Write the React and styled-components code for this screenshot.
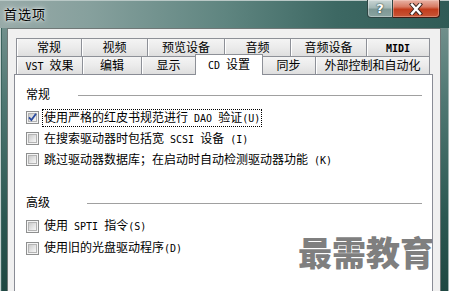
import styled, { createGlobalStyle } from "styled-components";

const Global = createGlobalStyle`
  html, body {
    margin: 0;
    padding: 0;
    overflow: hidden;
    background: #ffffff;
  }
`;

const backTabs = [
  { label: "常规", w: 66 },
  { label: "视频", w: 66 },
  { label: "预览设备", w: 77 },
  { label: "音频", w: 66 },
  { label: "音频设备", w: 76 },
  { label: "MIDI", w: 63, bold: true },
];

const frontTabs = [
  { label: "VST 效果", w: 67 },
  { label: "编辑", w: 59 },
  { label: "显示", w: 54 },
  { label: "CD 设置", w: 68, active: true },
  { label: "同步", w: 54 },
  { label: "外部控制和自动化", w: 114 },
];

// ascii runs get the narrow fixed-width face, like the bitmap font in the dialog
function Mixed({ text }) {
  return text.split(/([\x20-\x7e]+)/).map((part, i) =>
    /^[\x20-\x7e]+$/.test(part) ? <Latin key={i}>{part}</Latin> : part
  );
}

function Check({ checked }) {
  return (
    <Box>
      {checked && (
        <CheckMark viewBox="0 0 13 13">
          <path d="M3 6.3 L5.4 9 L10 2.8" fill="none" stroke="#2a4b9f" strokeWidth="1.8" />
        </CheckMark>
      )}
    </Box>
  );
}

function Option({ text, checked, focused }) {
  return (
    <Row>
      <Check checked={checked} />
      <Label $focused={focused}>
        <Mixed text={text} />
      </Label>
    </Row>
  );
}

export default function App() {
  return (
    <>
      <Global />
      <Window>
        <TitleBar>
          <Title>首选项</Title>
          <Buttons>
            <HelpButton>?</HelpButton>
            <CloseButton>
              <svg width="18" height="12" viewBox="0 0 18 12">
                <path d="M5 1.5 L13 10.5 M13 1.5 L5 10.5" stroke="#3a2520" strokeWidth="4.2" strokeLinecap="square" />
                <path d="M5 1.5 L13 10.5 M13 1.5 L5 10.5" stroke="#ffffff" strokeWidth="2.4" strokeLinecap="square" />
              </svg>
            </CloseButton>
          </Buttons>
        </TitleBar>
        <Client>
          <Tabs>
            <TabRow>
              {backTabs.map((t) => (
                <Tab key={t.label} $w={t.w} $bold={t.bold}>
                  <Mixed text={t.label} />
                </Tab>
              ))}
            </TabRow>
            <TabRow>
              {frontTabs.map((t) => (
                <Tab key={t.label} $w={t.w} $active={t.active}>
                  <Mixed text={t.label} />
                </Tab>
              ))}
            </TabRow>
          </Tabs>
          <Panel>
            <GroupHeader>
              <GroupTitle>常规</GroupTitle>
              <Rule $indent={28} />
            </GroupHeader>
            <Options>
              <Option checked focused text="使用严格的红皮书规范进行 DAO 验证(U)" />
              <Option text="在搜索驱动器时包括宽 SCSI 设备 (I)" />
              <Option text="跳过驱动器数据库；在启动时自动检测驱动器功能 (K)" />
            </Options>
            <GroupHeader $top={25}>
              <GroupTitle>高级</GroupTitle>
              <Rule $indent={37} />
            </GroupHeader>
            <Options $rowHeight={22}>
              <Option text="使用 SPTI 指令(S)" />
              <Option text="使用旧的光盘驱动程序(D)" />
            </Options>
            <Watermark>最需教育</Watermark>
          </Panel>
        </Client>
      </Window>
    </>
  );
}

const Window = styled.div`
  width: 449px;
  height: 291px;
  overflow: hidden;
  display: flex;
  flex-direction: column;
  font-family: "Noto Sans CJK SC", "Liberation Sans", sans-serif;
  font-size: 12px;
  color: #000;
  background: linear-gradient(180deg, #7d9895 0%, #4f7772 35%, #2b5751 75%, #1f4842 100%);
  box-shadow: inset 1px 0 0 #c3d0ce, inset -1px 0 0 #9fb2b0, inset 2px 0 0 #3a625d;
`;

const TitleBar = styled.div`
  height: 28px;
  flex: none;
  display: flex;
  justify-content: space-between;
  align-items: flex-start;
  background: linear-gradient(90deg, #98aaa8 0%, #86a09d 20%, #5f8580 50%, #3d6863 75%, #2f5b56 100%);
  box-shadow: inset 0 1px 0 #b9c8c6;
`;

const Title = styled.div`
  padding: 6px 0 0 4px;
  font-size: 13px;
  line-height: 15px;
  letter-spacing: 1px;
  color: #000;
  text-shadow: 0 0 6px rgba(255, 255, 255, 0.9), 0 0 3px rgba(255, 255, 255, 0.9);
`;

const Buttons = styled.div`
  display: flex;
  margin-right: 9px;
`;

const HelpButton = styled.div`
  width: 26px;
  height: 18px;
  box-sizing: border-box;
  border: 1px solid #2e4644;
  border-top: none;
  border-radius: 0 0 0 4px;
  background: linear-gradient(180deg, #c9d5d4 0%, #a4b8b6 45%, #7e9895 55%, #89a3a0 100%);
  box-shadow: inset 0 0 0 1px rgba(255, 255, 255, 0.35);
  color: #fff;
  font-family: "DejaVu Sans", sans-serif;
  font-weight: bold;
  font-size: 13px;
  line-height: 17px;
  text-align: center;
  text-shadow: 0 0 2px #24403c, 0 0 1px #24403c;
`;

const CloseButton = styled.div`
  width: 47px;
  height: 18px;
  box-sizing: border-box;
  border: 1px solid #3e1a12;
  border-left: none;
  border-top: none;
  border-radius: 0 0 4px 0;
  display: flex;
  align-items: center;
  justify-content: center;
  background: linear-gradient(180deg, #e9b3a6 0%, #d87a63 40%, #c23c1c 55%, #c85638 100%);
  box-shadow: inset 0 0 0 1px rgba(255, 220, 210, 0.35);
`;

const Client = styled.div`
  flex: 1;
  margin: 0 8px 0 7px;
  border: 1px solid #707877;
  border-bottom: none;
  background: #f0f0f0;
  padding: 9px 7px 0 6px;
  display: flex;
  flex-direction: column;
  min-height: 0;
`;

const Tabs = styled.div`
  display: flex;
  flex-direction: column;
  padding-left: 2px;
  position: relative;
  z-index: 1;
`;

const TabRow = styled.div`
  display: flex;
  height: 18px;
  align-items: flex-end;
`;

const Tab = styled.div`
  width: ${(p) => p.$w}px;
  height: ${(p) => (p.$active ? 21 : 18)}px;
  margin-bottom: ${(p) => (p.$active ? -1 : 0)}px;
  margin-left: ${(p) => (p.$active ? -1 : 0)}px;
  margin-right: ${(p) => (p.$active ? -1 : 0)}px;
  box-sizing: border-box;
  border: 1px solid #8d9097;
  border-bottom: none;
  border-left-width: ${(p) => (p.$active ? 1 : 0)}px;
  background: ${(p) => (p.$active ? "#ffffff" : "linear-gradient(180deg, #f4f4f4 0%, #ebebeb 50%, #dedede 100%)")};
  box-shadow: ${(p) => (p.$active ? "none" : "inset 1px 0 0 #ffffff")};
  text-align: center;
  line-height: ${(p) => (p.$active ? 18 : 16)}px;
  font-weight: ${(p) => (p.$bold ? "bold" : "normal")};
  white-space: nowrap;
  position: relative;
  z-index: ${(p) => (p.$active ? 2 : 0)};

  &:first-child {
    border-left-width: 1px;
  }
`;

const Latin = styled.span`
  font-family: "DejaVu Sans Mono", "Liberation Mono", monospace;
  font-size: 10px;
`;

const Panel = styled.div`
  position: relative;
  flex: none;
  height: 240px;
  background: #ffffff;
  border: 1px solid #898c95;
  padding: 12px 10px 0 11px;
`;

const GroupHeader = styled.div`
  display: flex;
  align-items: center;
  height: 14px;
  margin-top: ${(p) => p.$top || 0}px;
`;

const GroupTitle = styled.span`
  line-height: 14px;
`;

const Rule = styled.div`
  flex: 1;
  height: 1px;
  background: #a0a0a0;
  margin-left: ${(p) => p.$indent}px;
  margin-top: 2px;
`;

const Options = styled.div`
  display: flex;
  flex-direction: column;
  margin-top: 6px;

  & > div {
    height: ${(p) => p.$rowHeight || 21}px;
  }
`;

const Row = styled.div`
  display: flex;
  align-items: center;
`;

const Box = styled.span`
  position: relative;
  width: 13px;
  height: 13px;
  box-sizing: border-box;
  flex: none;
  border: 1px solid #8e8f8f;
  background: #f4f4f4;

  &::after {
    content: "";
    position: absolute;
    inset: 1px;
    border: 1px solid #b4b4b4;
    background: linear-gradient(135deg, #cbcbcb 0%, #e6e6e6 60%, #f6f6f6 100%);
  }
`;

const CheckMark = styled.svg`
  position: absolute;
  left: -1px;
  top: -1px;
  width: 13px;
  height: 13px;
  z-index: 1;
`;

const Label = styled.span`
  margin-left: 3px;
  padding: 0 1px;
  line-height: 14px;
  border: 1px dotted ${(p) => (p.$focused ? "#000" : "transparent")};
  white-space: nowrap;
`;

const Watermark = styled.div`
  position: absolute;
  left: 283px;
  top: 158px;
  font-size: 34px;
  line-height: 38px;
  font-weight: 900;
  color: #7f7f7f;
  white-space: nowrap;
`;
